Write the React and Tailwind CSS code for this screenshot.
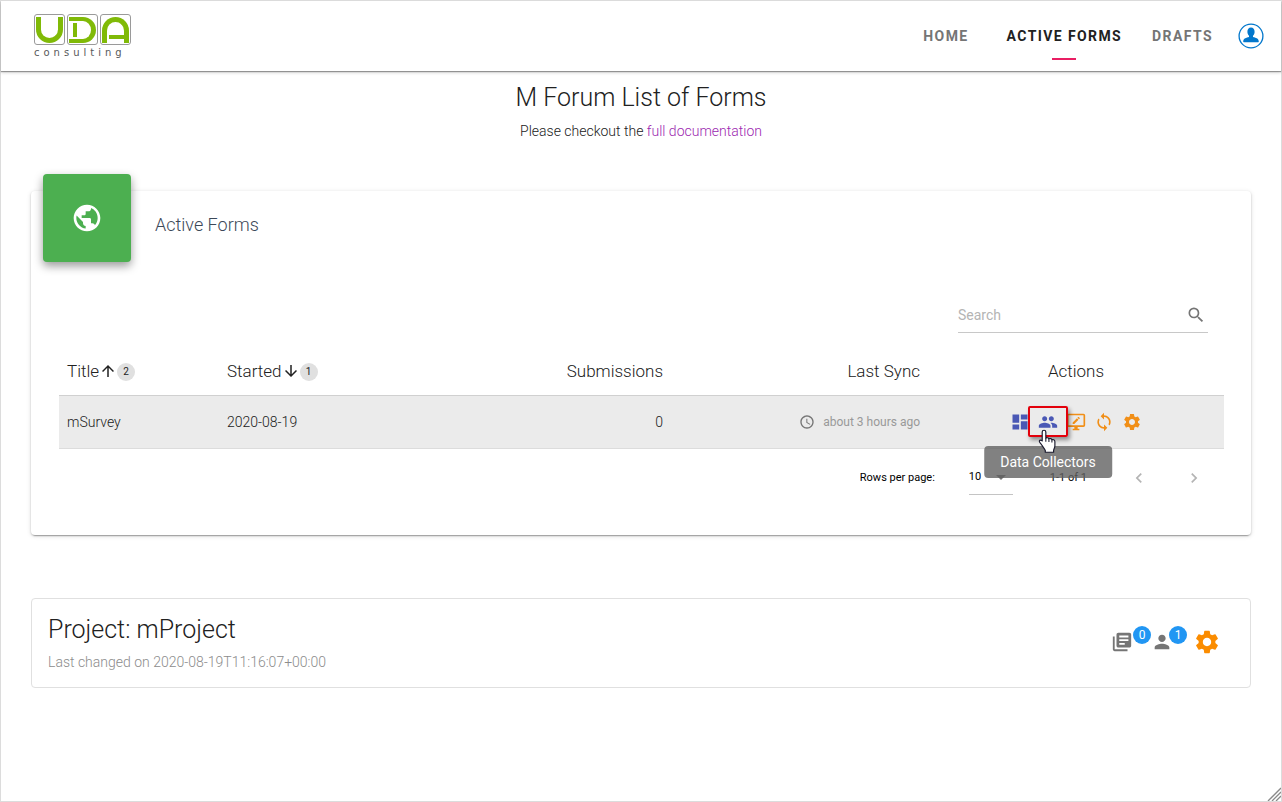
import React from "react";
import {
  MdAccessTime,
  MdArrowDownward,
  MdArrowDropDown,
  MdArrowUpward,
  MdChevronLeft,
  MdChevronRight,
  MdDashboard,
  MdLibraryBooks,
  MdPeople,
  MdPerson,
  MdPublic,
  MdSearch,
  MdSettings,
  MdSync,
} from "react-icons/md";

function Logo() {
  const tile = "flex size-[31px] justify-center rounded-[3px] border border-[#9a9a9a] pt-0.5";
  return (
    <a href="#home" aria-label="UDA consulting" className="flex flex-col">
      <span className="flex gap-0.5">
        <span className={tile}>
          <span className="h-[26px] w-[27px] rounded-b-[14px] border-x-[5px] border-b-[5px] border-[#80ba07]" />
        </span>
        <span className={tile}>
          <span className="flex h-[26px] w-[27px] items-end rounded-r-[13px] border-y-4 border-r-[5px] border-[#80ba07] pb-0.5 pl-1">
            <span className="h-3.5 w-1 bg-[#80ba07]" />
          </span>
        </span>
        <span className={tile}>
          <span className="flex h-[26px] w-[27px] items-end rounded-t-[14px] border-x-[5px] border-t-[5px] border-[#80ba07] pb-1 pl-0.5">
            <span className="h-1 w-full bg-[#80ba07]" />
          </span>
        </span>
      </span>
      <span className="pt-0.5 font-['DejaVu_Sans',sans-serif] text-[10px] font-normal leading-3 tracking-[4px] text-[#58595b]">
        consulting
      </span>
    </a>
  );
}

function UserIcon() {
  return (
    <svg viewBox="0 0 26 26" className="size-[26px]" aria-hidden="true">
      <circle cx="13" cy="13" r="11.9" fill="#fff" stroke="#0277cc" strokeWidth="1.3" />
      <path
        fill="#0277cc"
        d="M13 4.600c2.300 0 3.600 1.700 3.600 4.100 0 1.700-.6 3.200-1.600 4.100v1.300c2.600.7 5.700 1.300 5.800 4.500 0 .4-.2.700-.6.700H5.800c-.4 0-.6-.3-.6-.7.1-3.200 3.200-3.800 5.800-4.500v-1.300c-1-.9-1.600-2.400-1.600-4.100 0-2.400 1.300-4.100 3.600-4.100z"
      />
    </svg>
  );
}

function MonitorEditIcon({ className }) {
  return (
    <svg viewBox="0 0 24 24" className={className} fill="currentColor" aria-hidden="true">
      <path d="M21 16V4H3v12h18m0-14a2 2 0 0 1 2 2v12a2 2 0 0 1-2 2h-7v2h2v2H8v-2h2v-2H3a2 2 0 0 1-2-2V4c0-1.110.9-2 2-2h18M8 12.500 13.100 7.400l1.900 1.900-5.100 5.100H8v-1.900M16.500 7.900l-.9.900-1.900-1.900.9-.9c.2-.2.5-.2.7 0l1.200 1.200c.2.200.2.500 0 .7z" />
    </svg>
  );
}

function HandCursor() {
  return (
    <svg viewBox="0 0 16 22.5" className="h-6 w-[18px]" aria-hidden="true">
      <path
        d="M5.200 1.200c1 0 1.700.7 1.700 1.700v5.600c.4-.5 2.500-.6 2.900.7.800-.6 2.500-.3 2.800.9 1-.5 2.800 0 2.800 1.800v3.700c0 1.900-1 2.900-1.200 4.400v1.800H6.400v-1.600c-.6-1.800-2.200-3.300-3.200-5.100-.6-1.200-2.600-2.700-2.400-3.800.3-1.200 1.900-1 2.700-.1V2.900c0-1 .7-1.700 1.700-1.700z"
        fill="#fff"
        stroke="#1a1a2e"
        strokeWidth="1.100"
        strokeLinejoin="round"
      />
      <path d="M6.900 8.500v3.500M9.800 9.200v3M12.600 10.200v2.400" stroke="#1a1a2e" strokeWidth="1" />
    </svg>
  );
}

function SortOrder({ children }) {
  return (
    <span className="mt-0.5 flex size-[18px] items-center justify-center rounded-full bg-[#e0e0e0] text-[10px] font-normal leading-none">
      {children}
    </span>
  );
}

function CountBadge({ children }) {
  return (
    <span className="flex size-[18px] items-center justify-center rounded-full bg-[#2196f3] text-xs font-normal leading-none text-white">
      {children}
    </span>
  );
}

function Header() {
  const link = "text-[#757575]";
  return (
    <header className="flex h-[70px] items-center justify-between pl-[33px] pr-[17px] shadow-[0_1px_1px_rgba(0,0,0,0.35),0_2px_3px_rgba(0,0,0,0.14)]">
      <Logo />
      <nav className="flex items-center text-sm font-bold tracking-widest">
        <a href="#home" className={link}>HOME</a>
        <a href="#active" className="relative ml-[38px] text-[#212121]">
          ACTIVE FORMS
          <span className="absolute left-1/2 top-8 h-0.5 w-6 -translate-x-1/2 bg-[#e91e63]" />
        </a>
        <a href="#drafts" className={"ml-[30px] " + link}>DRAFTS</a>
        <button type="button" aria-label="Account" className="ml-[25px]">
          <UserIcon />
        </button>
      </nav>
    </header>
  );
}

function RowActions() {
  const item = "flex h-7 w-7 items-center justify-center";
  return (
    <div className="flex justify-center">
      <button type="button" aria-label="Dashboard" className={item + " text-[#4a58b5]"}>
        <MdDashboard className="size-5" />
      </button>
      <div className="relative">
        <button
          type="button"
          aria-label="Data Collectors"
          aria-describedby="collectors-tip"
          className={item + " text-[#4a58b5]"}
        >
          <MdPeople className="size-5" />
        </button>
        <span className="absolute -left-1.5 -top-0.5 z-10 h-[31px] w-10 rounded-xs border-2 border-[#e3000b] shadow-[2px_3px_4px_rgba(0,0,0,0.4)]" />
        <span
          id="collectors-tip"
          role="tooltip"
          className="absolute left-1/2 top-[38px] z-10 flex h-8 -translate-x-1/2 items-center whitespace-nowrap rounded bg-[#616161]/80 px-4 text-sm font-normal text-white"
        >
          Data Collectors
        </span>
        <span className="absolute left-1 top-[21px] z-20">
          <HandCursor />
        </span>
      </div>
      <button type="button" aria-label="Edit form" className={item + " text-[#f18f17]"}>
        <MonitorEditIcon className="size-5" />
      </button>
      <button type="button" aria-label="Synchronise" className={item + " text-[#f18f17]"}>
        <MdSync className="size-5" />
      </button>
      <button type="button" aria-label="Settings" className={item + " text-[#f18f17]"}>
        <MdSettings className="size-5" />
      </button>
    </div>
  );
}

function FormsTable() {
  return (
    <table className="w-full table-fixed text-left">
      <colgroup>
        <col className="w-40" />
        <col className="w-40" />
        <col />
        <col className="w-[257px]" />
        <col className="w-[296px]" />
      </colgroup>
      <thead>
        <tr className="h-12 border-b border-[#d0d0d0] text-[17px] text-[#212121]">
          <th className="px-2 font-light">
            <button type="button" className="flex items-center">
              Title
              <MdArrowUpward className="size-[18px]" />
              <SortOrder>2</SortOrder>
            </button>
          </th>
          <th className="px-2 font-light">
            <button type="button" className="flex items-center">
              Started
              <MdArrowDownward className="size-[18px]" />
              <SortOrder>1</SortOrder>
            </button>
          </th>
          <th className="px-2 text-right font-light">Submissions</th>
          <th className="px-2 text-right font-light">Last Sync</th>
          <th className="px-2 text-center font-light">Actions</th>
        </tr>
      </thead>
      <tbody>
        <tr className="h-[53px] border-b border-[#dcdcdc] bg-[#ebebeb] text-sm text-[#212121]">
          <td className="px-2">mSurvey</td>
          <td className="px-2">2020-08-19</td>
          <td className="px-2 text-right">0</td>
          <td className="px-2">
            <div className="flex items-center justify-end gap-2 text-xs font-normal text-[#999]">
              <MdAccessTime className="size-4 text-[#757575]" />
              about 3 hours ago
            </div>
          </td>
          <td className="px-2">
            <RowActions />
          </td>
        </tr>
      </tbody>
    </table>
  );
}

function Pagination() {
  return (
    <div className="flex h-14 items-center justify-end text-[11px] font-normal text-black">
      <label htmlFor="rows">Rows per page:</label>
      <span className="relative ml-[34px] flex h-[34px] w-11 items-center border-b border-[#c4c4c4]">
        <select id="rows" defaultValue="10" className="w-full appearance-none bg-transparent outline-none">
          <option>10</option>
          <option>25</option>
        </select>
        <MdArrowDropDown className="pointer-events-none absolute right-0 size-6 text-[#757575]" />
      </span>
      <span className="ml-[37px]">1-1 of 1</span>
      <button type="button" aria-label="Previous page" className="ml-[42px] text-[#b4b4b4]">
        <MdChevronLeft className="size-5" />
      </button>
      <button type="button" aria-label="Next page" className="ml-[35px] mr-5 text-[#b4b4b4]">
        <MdChevronRight className="size-5" />
      </button>
    </div>
  );
}

export default function App() {
  return (
    <div className="relative min-h-screen border border-[#dcdcdc] bg-white font-['Roboto',sans-serif] text-sm font-light text-[#212121]">
      <Header />
      <main className="px-[30px] pt-[9px]">
        <div className="text-center">
          <h1 className="text-[25px] leading-9">M Forum List of Forms</h1>
          <p className="mt-[5px] leading-5">
            Please checkout the{" "}
            <a href="#docs" className="text-[#9c27b0]">full documentation</a>
          </p>
        </div>

        <section className="mt-[50px] rounded bg-white pb-[29px] pl-7 pr-[27px] shadow-[0_3px_1px_-2px_rgba(0,0,0,0.2),0_1px_2px_0_rgba(0,0,0,0.2),0_1px_5px_0_rgba(0,0,0,0.12)]">
          <div className="-ml-4 flex items-start gap-6">
            <div className="-mt-[17px] flex size-[88px] items-center justify-center rounded bg-[#4caf50] text-white shadow-[0_4px_10px_rgba(0,0,0,0.4)]">
              <MdPublic className="size-8" />
            </div>
            <h2 className="pt-5 text-lg leading-7 text-[#3c4858]">Active Forms</h2>
          </div>
          <div className="mt-9 flex justify-end pr-4">
            <label className="flex h-[35px] w-[250px] items-center border-b border-[#c8c8c8]">
              <input
                type="text"
                aria-label="Search"
                placeholder="Search"
                className="min-w-0 flex-1 bg-transparent font-normal outline-none placeholder:text-[#b4b4b4]"
              />
              <MdSearch className="mr-0.5 size-5 text-[#757575]" />
            </label>
          </div>
          <div className="mt-3.5">
            <FormsTable />
          </div>
          <div className="pt-px">
            <Pagination />
          </div>
        </section>

        <section className="mt-[63px] flex items-center justify-between rounded border border-[#e0e0e0] pb-[15px] pl-4 pr-[29px] pt-[13px]">
          <div>
            <h2 className="text-[25px] leading-9">Project: mProject</h2>
            <p className="mt-1 leading-5 text-[#8c8c8c]">
              Last changed on 2020-08-19T11:16:07+00:00
            </p>
          </div>
          <div className="flex items-center text-[#757575]">
            <span className="flex items-center">
              <MdLibraryBooks className="size-[22px]" />
              <span className="mb-3.5"><CountBadge>0</CountBadge></span>
            </span>
            <span className="flex items-center">
              <MdPerson className="size-[22px]" />
              <span className="-ml-1 mb-3.5"><CountBadge>1</CountBadge></span>
            </span>
            <button type="button" aria-label="Project settings" className="ml-1.5 text-[#fb8c00]">
              <MdSettings className="size-7" />
            </button>
          </div>
        </section>
      </main>

      <svg viewBox="0 0 14 14" className="absolute bottom-0 right-0 size-3.5" aria-hidden="true">
        <path d="M1 14 14 1M5 14l9-9M9 14l5-5" stroke="#8a8a8a" strokeWidth="1.300" fill="none" />
      </svg>
    </div>
  );
}
